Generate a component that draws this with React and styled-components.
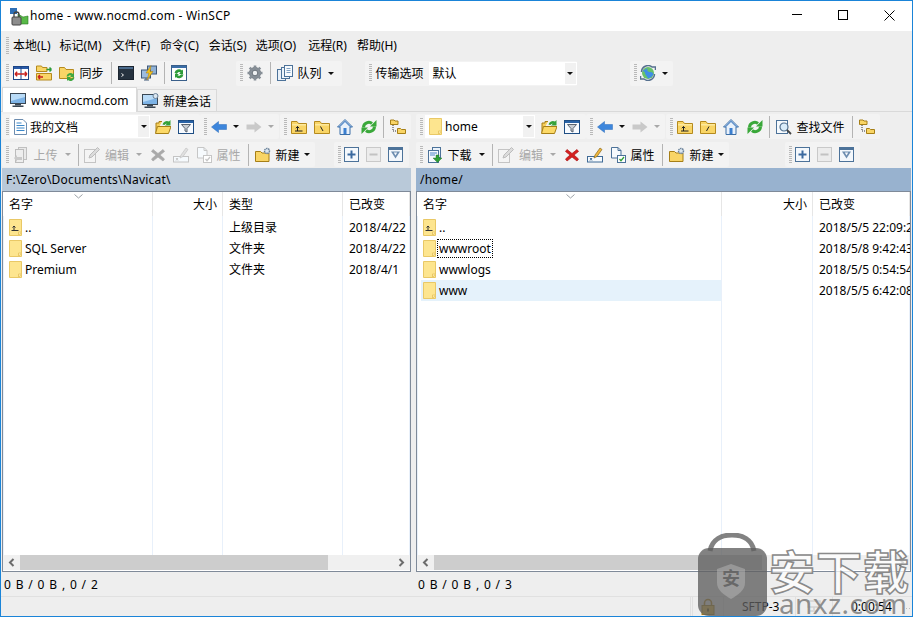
import React from 'react';
import styled, { createGlobalStyle } from 'styled-components';

const Global = createGlobalStyle`
  html, body { margin: 0; padding: 0; background: #eeeeee; }
  * { box-sizing: border-box; }
  body { font-family: "Noto Sans", "Noto Sans CJK SC", sans-serif; font-size: 12px; color: #000; }
`;

const Win = styled.div`
  width: 913px; height: 617px; position: relative; overflow: hidden;
  display: flex; flex-direction: column;
  border: 1px solid #1a84d8; background: #eeeeee;
`;
const TitleBar = styled.div`
  height: 30px; flex: none; background: #fff; display: flex; align-items: center; padding-left: 8px;
`;
const TitleText = styled.span`flex: 1; font-size: 12px; line-height: 16px; letter-spacing: .24px;`;
const WinBtn = styled.div`width: 46px; height: 30px; padding-bottom: 2px; display: flex; align-items: center; justify-content: center;`;
const MenuRow = styled.div`height: 29px; flex: none; display: flex; align-items: center; padding-left: 5px;`;
const MenuItem = styled.span`margin-left: ${p => p.$ml}px; white-space: nowrap; line-height: 16px;`;
const Row = styled.div`display: flex; align-items: center; height: ${p => p.$h || 27}px; padding-bottom: ${p => p.$pb || 0}px; flex: none;`;
const Band = styled.div`
  display: flex; align-items: center; height: 25px; background: #f3f3f3; border-radius: 2px;
  margin-left: ${p => p.$ml || 0}px; padding-left: 4px; padding-right: ${p => p.$pr ?? 2}px;
`;
const Handle = styled.i`
  display: block; width: 3px; height: 18px; flex: none;
  background: repeating-linear-gradient(to bottom, #b9b9b9 0 1px, transparent 1px 2px);
`;
const Sep = styled.i`display: block; width: 1px; height: 22px; background: #b4b4b4; margin: 0 2px 0 ${p => p.$l ?? 4}px; flex: none;`;
const Btn = styled.div`
  display: flex; align-items: center; height: 22px; padding: 0 3.5px; gap: 5px; flex: none; white-space: nowrap;
  color: ${p => p.$off ? '#a8a8a8' : '#000'}; margin-left: ${p => p.$ml || 0}px;
`;
const Caret = styled.i`
  display: block; width: 0; height: 0; flex: none; margin: 0 ${p => p.$mr ?? 3}px 0 ${p => p.$ml ?? 3}px;
  border: 3px solid transparent; border-bottom: 0; border-top: 3px solid ${p => p.$off ? '#a8a8a8' : '#111'};
`;
const Combo = styled.div`
  display: flex; align-items: center; height: 23px; width: ${p => p.$w}px; background: #fff; flex: none;
  margin-left: ${p => p.$ml || 0}px; border: 1px solid #fff; padding-left: 3px; gap: 3px;
`;
const ComboText = styled.span`flex: 1; white-space: nowrap;`;
const ComboDrop = styled.div`width: 11px; height: 21px; background: #f1f1f1; display: flex; align-items: center; justify-content: center;`;
const ComboCaret = styled(Caret)`margin: 0;`;
const Plain = styled.span`margin-left: ${p => p.$ml || 0}px; white-space: nowrap; flex: none;`;
const Tabs = styled.div`height: 26px; flex: none; display: flex; align-items: flex-end; border-bottom: 1px solid #d9d9d9; padding-left: 1px;`;
const Tab = styled.div`
  height: ${p => p.$on ? 25 : 22}px; width: ${p => p.$w}px; display: flex; align-items: center; gap: 4px; flex: none;
  background: ${p => p.$on ? '#fff' : '#f0f0f0'}; border: 1px solid #d9d9d9; border-bottom: 0; padding-left: ${p => p.$on ? 7 : 4}px;
  margin-bottom: ${p => p.$on ? -1 : 0}px; position: relative;
`;
const Panels = styled.div`flex: 1; display: flex; min-height: 0; padding: 2px 0 0 1px; gap: 5px;`;
const Panel = styled.div`width: ${p => p.$w}px; flex: none; display: flex; flex-direction: column;`;
const PathBar = styled.div`height: 23px; flex: none; background: ${p => p.$c}; display: flex; align-items: center; padding-left: 4px; font-size: 12px; letter-spacing: .2px;`;
const ListBox = styled.div`
  height: 381px; flex: none; border: 1px solid #7f8a99; background: #fff; display: flex; flex-direction: column; position: relative;
`;
const HeadRow = styled.div`height: 24px; flex: none; display: grid; grid-template-columns: ${p => p.$cols}; position: relative;`;
const Head = styled.div`
  border-right: 1px solid #e6e6e6; padding: 5px 5px 0 6px; text-align: ${p => p.$r ? 'right' : 'left'}; white-space: nowrap; overflow: hidden;
  line-height: 16px;
`;
const SortMark = styled.svg`position: absolute; top: 2px; left: ${p => p.$x}px;`;
const Body = styled.div`flex: 1; position: relative; padding-top: 1px; min-height: 0;`;
const Lines = styled.div`
  position: absolute; inset: 0; display: grid; grid-template-columns: ${p => p.$cols}; pointer-events: none;
`;
const LineCol = styled.div`border-right: 1px solid #e8f0fa; &:first-child { border-left: 1px solid #e8f0fa; }`;
const FileRow = styled.div`height: 21px; display: grid; grid-template-columns: ${p => p.$cols}; position: relative; white-space: nowrap; align-items: center; line-height: 16px;`;
const NameCell = styled.div`
  display: flex; align-items: center; gap: 3px; padding-left: 6px; height: 21px;
  background: ${p => p.$sel ? 'linear-gradient(#e5f2fb,#e5f2fb) 4px 0/calc(100% - 5px) 100% no-repeat' : 'none'};
`;
const FileName = styled.span`
  ${p => p.$focus ? 'outline: 1px dotted #000; outline-offset: 1px; line-height: 15px;' : ''}
`;
const Cell = styled.div`padding-left: 6px; overflow: hidden;`;
const HBar = styled.div`height: 15px; flex: none; background: #f0f0f0; display: flex; align-items: stretch; margin: 0 0 1px 0;`;
const ScrollBtn = styled.div`width: 17px; flex: none; display: flex; align-items: center; justify-content: center;`;
const Track = styled.div`flex: 1; position: relative;`;
const Thumb = styled.div`height: 100%; width: ${p => p.$w}px; background: #cdcdcd;`;
const Stat = styled.div`height: 23px; flex: none; display: flex; align-items: center; padding: 2px 0 0 2px; letter-spacing: .85px; font-size: 12px;`;
const BottomBar = styled.div`height: 20px; flex: none; border-top: 1px solid #e0e0e0; display: flex; justify-content: flex-end; align-items: stretch;`;
const SCell = styled.div`
  width: ${p => p.$w}px; flex: none; border-left: 1px solid #e0e0e0; display: flex; align-items: center; padding-left: ${p => p.$pl ?? 0}px;
  white-space: nowrap; padding-bottom: 1px;
`;
const Grip = styled.div`
  width: 7px; flex: none;
  background: radial-gradient(circle, #bdbdbd 0 1px, transparent 1px) 0 0/3px 3px;
  background-position: 0 10px; background-repeat: repeat-x;
`;
const Mark = styled.div`position: absolute; left: 695px; top: 532px; width: 216px; height: 84px; pointer-events: none;`;
const BagSvg = styled.svg`position: absolute; left: 0; top: 0;`;
const BagChar = styled.span`
  position: absolute; left: 26px; top: 34px; width: 18px; text-align: center; font-size: 18px; line-height: 20px; font-weight: 700;
  font-family: "Noto Sans CJK SC", sans-serif; color: rgba(95,95,95,.85);
`;
const MarkCn = styled.div`
  position: absolute; left: 73px; top: 16px; font-size: 46px; line-height: 40px; font-weight: 700; letter-spacing: 1px; white-space: nowrap;
  font-family: "Noto Sans CJK SC", sans-serif; color: rgba(255,255,255,.75); -webkit-text-stroke: 1.5px #8a8a8a;
`;
const MarkEn = styled.div`
  position: absolute; left: 83px; top: 59px; font-size: 28px; line-height: 22px; letter-spacing: .4px; color: rgba(125,125,125,.85); white-space: nowrap;
`;

const S = ({ children, w = 16, h = 16 }) => (
  <svg width={w} height={h} viewBox={`0 0 ${w} ${h}`} style={{ flex: 'none', display: 'block' }}>{children}</svg>
);
const Folder = ({ children }) => (
  <S><path d="M.5 14.500V2.500h5.500l1.500 2h8v10z" fill="#f9d566" stroke="#b58a1e" /><path d="M1 5h14v1.500H1z" fill="#fde99d" />{children}</S>
);
const FolderUp = () => <Folder><path d="M4 12h7.500M6.500 12V7.500M4.800 9.200L6.500 7.500l1.700 1.700" fill="none" stroke="#222" /></Folder>;
const FolderRoot = () => <Folder><path d="M6.500 7.500l2.500 4.500" stroke="#222" fill="none" /></Folder>;
const FolderSlash = () => <Folder><path d="M9 7.500l-2.500 4.500" stroke="#222" fill="none" /></Folder>;
const Compare = () => <S><rect x=".5" y="1.500" width="15" height="13" fill="#fff" stroke="#1c4587" /><rect x="1" y="2" width="14" height="2" fill="#2a5ba8" /><path d="M8 2v12" stroke="#1c4587" /><path d="M2 9h12M2 9l2.200-2.200M2 9l2.200 2.200M14 9l-2.200-2.200M14 9l-2.200 2.200" stroke="#c8201c" strokeWidth="1.400" fill="none" /></S>;
const SyncFolders = () => <S><path d="M.5 6.500V1h5l1 1.500H11v4z" fill="#f9d566" stroke="#b58a1e" /><path d="M.5 15V8.500h15V15z" fill="#f9d566" stroke="#b58a1e" /><path d="M2 12h5M2 12l2-2M2 12l2 2" stroke="#c8201c" strokeWidth="1.500" fill="none" /><path d="M15.500 4.500h-5M15.500 4.500l-2-2M15.500 4.500l-2 2" stroke="#2e9c3a" strokeWidth="1.500" fill="none" /></S>;
const FolderSync = () => <S><path d="M.5 13.500V2.500h5l1.500 2h7.500v9z" fill="#f9d566" stroke="#b58a1e" /><path d="M7.500 11.500A4 4 0 0 1 14 9l1-1v4h-4l1.300-1.300a2 2 0 0 0-3 .8z" fill="#3da73f" /><path d="M15.500 12.500A4 4 0 0 1 9 15l-1 1v-4h4l-1.300 1.300a2 2 0 0 0 3-.8z" fill="#3da73f" /></S>;
const Term = () => <S><rect x=".5" y="1.500" width="15" height="13" fill="#26323f" stroke="#1c2530" /><rect x="1" y="2" width="14" height="2" fill="#4a6a8c" /><path d="M3.500 8.500l2 1.500-2 1.500" stroke="#eee" fill="none" /></S>;
const Putty = () => <S><rect x="6.500" y="1" width="9" height="8" fill="#8fb1d6" stroke="#3e5878" /><rect x=".5" y="5" width="9" height="8" fill="#9dbce0" stroke="#3e5878" /><path d="M3 15h5M5 13v2" stroke="#3e5878" /><path d="M10 .5L5 8h3l-2 7 6-8.500H9z" fill="#f4c51f" stroke="#a87a10" strokeWidth=".5" /></S>;
const SyncBrowse = () => <S><rect x=".5" y=".5" width="15" height="15" fill="#fff" stroke="#3a5f8a" /><rect x="1" y="1" width="14" height="2" fill="#3a6ea8" /><path d="M3.500 8a4.500 4.500 0 0 1 7.500-2.500l1-1V9H8l1.500-1.500A2.300 2.300 0 0 0 6 9z" fill="#2e9c3a" /><path d="M12.500 9.500A4.500 4.500 0 0 1 5 12l-1 1V9h4l-1.500 1.300a2.300 2.300 0 0 0 3.500-1z" fill="#2e9c3a" /></S>;
const Gear = () => <S><circle cx="8" cy="8" r="5.500" fill="#8f979f" stroke="#6b737b" /><path d="M8 .5v15M.5 8h15M2.700 2.700l10.600 10.600M13.300 2.700L2.700 13.300" stroke="#878f97" strokeWidth="2.600" /><circle cx="8" cy="8" r="2.800" fill="#eef0f2" stroke="#6b737b" /></S>;
const Queue = () => <S><rect x=".5" y="4.500" width="8" height="11" fill="#e9f1f9" stroke="#4c7299" /><rect x="4.500" y="2.500" width="8" height="11" fill="#eef5fb" stroke="#4c7299" /><rect x="7.500" y=".5" width="8" height="11" fill="#f6fafd" stroke="#4c7299" /><path d="M9.500 3.500h4M9.500 5.500h4M9.500 7.500h4" stroke="#7fa0c2" /></S>;
const Globe = () => <S><circle cx="8" cy="8" r="6" fill="#67c16a" /><path d="M8 3c-2 2 0 4 2 4s4 1 3 3-3 3-5 3.500C7 11 5 10 5 8S3 7 3 5.500z" fill="#3f8ee6" /><path d="M1.500 7A6.500 6.500 0 0 1 12 2h3.500V5M14.500 9A6.500 6.500 0 0 1 4 14H.5v-3" fill="none" stroke="#56708f" strokeWidth="1.500" /></S>;
const OpenFolder = () => <S><path d="M1 14V4h3V2.500h3" fill="#f6cf5c" stroke="#a67f17" /><path d="M.5 14.500L2.500 7.500H16L13.500 14.500z" fill="#fcd967" stroke="#a67f17" /><path d="M7.500 5.500a4.500 4.500 0 0 1 6.500-3L15.500 1v5.500h-5.500l1.800-1.800A2.300 2.300 0 0 0 9.500 6z" fill="#35a13a" /></S>;
const Filter = () => <S><rect x=".5" y="1.500" width="15" height="13" fill="#f8fbff" stroke="#1f4e84" /><rect x="1" y="2" width="14" height="2" fill="#2a63a6" /><path d="M3.500 5.500h9L9 9.500V13L7 12V9.500z" fill="#c9ced4" stroke="#5a6470" /></S>;
const ArrowL = () => <S><path d="M.5 8L7.500 2.500V5.500H15.500V10.500H7.500V13.500z" fill="#3d86dc" stroke="#2a6cbb" strokeWidth=".5" /></S>;
const ArrowR = () => <S><path d="M15.500 8L8.500 2.500V5.500H.500V10.500H8.500V13.500z" fill="#c9c9c9" /></S>;
const Home = () => <S><path d="M8 .5L.5 8H3v7.500h10V8h2.500z" fill="#e9f1fa" stroke="#3b6fa8" /><path d="M8 1.500L1.500 8H3l5-5 5 5h1.500z" fill="#4f86c6" /><rect x="6.500" y="9" width="3" height="6" fill="#3b7fd0" /></S>;
const Refresh = () => <S><path d="M2.500 8.500C2.500 4 8 2 11 4.500" fill="none" stroke="#3aa83a" strokeWidth="3" /><path d="M9 7.500h6.500V1z" fill="#3aa83a" /><path d="M13.500 7.500C13.500 12 8 14 5 11.500" fill="none" stroke="#3aa83a" strokeWidth="3" /><path d="M7 8.500H.5V15z" fill="#3aa83a" /></S>;
const Tree = () => <S><path d="M.5 5.500V1h3.500l1 1h3v3.500z" fill="#f9d566" stroke="#a67f17" /><path d="M7.500 14.500V9.500h3l1 1h4v4z" fill="#f9d566" stroke="#a67f17" /><path d="M3 6v6h4" stroke="#333" strokeDasharray="1 1" fill="none" /></S>;
const Upload = () => <S><rect x="5.500" y=".5" width="8" height="12" fill="#e9e9e9" stroke="#c0c0c0" /><rect x="2.500" y="2.500" width="8" height="13" fill="#eee" stroke="#bcbcbc" /><path d="M1 11l3-3v2h5v3H4v2z" fill="#c9c9c9" /></S>;
const Download = () => <S><rect x="5.500" y=".5" width="8" height="10" fill="#eaf2fa" stroke="#4c7299" /><rect x="1.500" y="3.500" width="10" height="12" fill="#f5f9fd" stroke="#4c7299" /><path d="M3 6h7M3 8h5" stroke="#4f86c6" /><path d="M6 11h3V8h3v3h3l-4.500 4.500z" fill="#2f9e36" stroke="#1f6f24" strokeWidth=".4" /></S>;
const Edit = () => <S><rect x=".5" y="2.500" width="11" height="13" fill="#f4f4f4" stroke="#c4c4c4" /><path d="M5 11l1-3 7.500-7.500 2 2L8 10z" fill="#dcdcdc" stroke="#bcbcbc" /></S>;
const XIcon = ({ off }) => <S><path d="M3 2.500L8 6.500 13 2.500 14.500 4.500 10 8 14.500 12 13 14 8 10 3 14 1.500 12 6 8 1.500 4.500z" fill={off ? '#a9a9a9' : '#d41f1f'} stroke={off ? '#a9a9a9' : '#b01717'} strokeWidth=".7" /></S>;
const Rename = ({ off }) => { const b = off ? '#c4c4c4' : '#3f6a96'; return <S><rect x=".5" y="9.500" width="15" height="5.500" fill="#f6fafd" stroke={b} /><path d="M3 11l2 2.500M5 11l-2 2.500" stroke={b} /><path d="M7 11l1-3 5-7 2 1.500-5 7z" fill={off ? '#e0e0e0' : '#f0b63c'} stroke={off ? '#c4c4c4' : '#8a6a1d'} strokeWidth=".7" /></S>; };
const Props = ({ off }) => { const b = off ? '#c6c6c6' : '#4c7299'; return <S><path d="M1.500 .5H8l3 3V11H1.500z" fill="#f6fafd" stroke={b} /><path d="M8 .5v3h3" fill="none" stroke={b} /><rect x="7.500" y="8.500" width="8" height="7" fill="#fff" stroke={b} /><path d="M9.500 12l1.500 1.700L14 10" fill="none" stroke={off ? '#c6c6c6' : '#2f9e36'} strokeWidth="1.300" /></S>; };
const NewFolder = () => <S><path d="M.5 14.500V4.500h5l1.500 1.500h7v8.500z" fill="#f9d566" stroke="#a67f17" /><circle cx="12" cy="4" r="2.500" fill="#dbe6ef" stroke="#6a8199" strokeDasharray="1.500 .6" strokeWidth="1.400" /></S>;
const SmallBox = ({ children, off }) => <S w={15} h={15}><rect x=".5" y=".5" width="14" height="14" fill={off ? '#ececec' : '#f4f8fc'} stroke={off ? '#c9c9c9' : '#4c7299'} />{children}</S>;
const Plus = () => <SmallBox><path d="M3.500 7.500h8M7.500 3.500v8" stroke="#3b6aa0" strokeWidth="2" /></SmallBox>;
const Minus = () => <SmallBox off><path d="M3.500 7.500h8" stroke="#c2c2c2" strokeWidth="2" /></SmallBox>;
const FilterD = () => <SmallBox><rect x="1" y="1" width="13" height="2" fill="#4c7299" /><path d="M3 4.500h9L7.500 11.500z" fill="#6d8db0" /><path d="M5.800 5.500h3.400L7.500 8.500z" fill="#f4f8fc" /></SmallBox>;
const Find = () => <S><rect x=".5" y="1.500" width="11" height="13" fill="#f6fafd" stroke="#4c7299" /><circle cx="8" cy="8" r="4" fill="#d9ecfa" stroke="#53718f" strokeWidth="1.200" /><path d="M11 11l4 4" stroke="#444" strokeWidth="1.800" /></S>;
const Doc = () => <S w={13} h={16}><path d="M.5 .5H9l3.500 3.500v11.500H.5z" fill="#fff" stroke="#6d8db0" /><path d="M2.500 4h5M2.500 6.500h8M2.500 9h8M2.500 11.500h8" stroke="#3b87c9" /></S>;
const Monitor = ({ gear }) => <S w={17} h={16}><rect x=".5" y="1.500" width="15" height="10" fill="#7db3e6" stroke="#3a4754" /><path d="M1 2h14v3L1 9z" fill="#b9dbf7" /><rect x="5" y="12" width="6" height="1.500" fill="#3a4754" /><rect x="2.500" y="13.500" width="11" height="1.500" fill="#3a4754" />{gear && <circle cx="13.500" cy="3" r="2.500" fill="#dbe6ef" stroke="#6a8199" />}</S>;
const PlainFolder = ({ up }) => <S w={13} h={17}><path d="M.5 .5H12.500V16.500H.5z" fill="#fde58f" stroke="#e9c866" /><path d="M9.500 16.500V13h3z" fill="#fff3c4" stroke="#e9c866" />{up && <path d="M2.500 11.500h7M5 11.500V7M3.500 8.500L5 7l1.500 1.500" fill="none" stroke="#333" />}</S>;

const Lbl = ({ children }) => <span>{children}</span>;

const Chevron = ({ dir }) => <svg width="9" height="9" viewBox="0 0 9 9"><path d={dir === 'l' ? 'M6.500 1L3 4.500 6.500 8' : 'M2.500 1L6 4.500 2.500 8'} fill="none" stroke="#6c6c6c" strokeWidth="2" /></svg>;

const FileList = ({ cols, heads, sortX, rows, thumb }) => (
  <ListBox>
    <HeadRow $cols={cols}>
      {heads.map(h => <Head key={h.t} $r={h.r}>{h.t}</Head>)}
      <SortMark $x={sortX} width="9" height="5" viewBox="0 0 9 5"><path d="M.5 .5L4.500 4 8.500 .5" fill="none" stroke="#9aa0a6" /></SortMark>
    </HeadRow>
    <Body>
      <Lines $cols={cols}>{heads.map(h => <LineCol key={h.t} />)}</Lines>
      {rows.map(r => (
        <FileRow key={r.name} $cols={cols}>
          <NameCell $sel={r.sel}>
            <PlainFolder up={r.up} />
            <FileName $focus={r.focus}>{r.name}</FileName>
          </NameCell>
          {r.cells.map((c, i) => <Cell key={i}>{c}</Cell>)}
        </FileRow>
      ))}
    </Body>
    <HBar>
      <ScrollBtn><Chevron dir="l" /></ScrollBtn>
      <Track><Thumb $w={thumb} /></Track>
      <ScrollBtn><Chevron dir="r" /></ScrollBtn>
    </HBar>
  </ListBox>
);

const leftCols = '150px 70px 120px 1fr';
const rightCols = '305px 91px 1fr';

const leftRows = [
  { name: '..', up: true, cells: ['', '上级目录', '2018/4/22'] },
  { name: 'SQL Server', cells: ['', '文件夹', '2018/4/22'] },
  { name: 'Premium', cells: ['', '文件夹', '2018/4/1'] },
];
const rightRows = [
  { name: '..', up: true, cells: ['', '2018/5/5 22:09:22'] },
  { name: 'wwwroot', focus: true, cells: ['', '2018/5/8 9:42:43'] },
  { name: 'wwwlogs', cells: ['', '2018/5/5 0:54:54'] },
  { name: 'www', sel: true, cells: ['', '2018/5/5 6:42:08'] },
];

const menus = [['本地(L)', 4], ['标记(M)', 9], ['文件(F)', 11], ['命令(C)', 10], ['会话(S)', 10], ['选项(O)', 9], ['远程(R)', 12], ['帮助(H)', 10]];

export default function App() {
  return (
    <Win>
      <Global />
      <TitleBar>
        <S w={21} h={21}>
          <path d="M1 2h7v6H1z" fill="#2f6fb5" />
          <path d="M9 8l5 3 5-1v8H9z" fill="#58b947" stroke="#2d7a25" strokeWidth=".6" />
          <rect x="3" y="11" width="9" height="8" rx="1" fill="#8d8d8d" stroke="#444" />
          <path d="M5 11V8.500a2.500 2.500 0 0 1 5 0V11" fill="none" stroke="#444" strokeWidth="1.300" />
        </S>
        <TitleText>home - www.nocmd.com - WinSCP</TitleText>
        <WinBtn><svg width="10" height="2"><path d="M0 .5h10" stroke="#000" /></svg></WinBtn>
        <WinBtn><svg width="10" height="10"><rect x=".5" y=".5" width="9" height="9" fill="none" stroke="#000" /></svg></WinBtn>
        <WinBtn><svg width="11" height="11"><path d="M.5 .5l10 10M10.500 .5l-10 10" stroke="#000" /></svg></WinBtn>
      </TitleBar>

      <MenuRow>
        <Handle />
        {menus.map(([m, ml]) => <MenuItem key={m} $ml={ml}>{m}</MenuItem>)}
      </MenuRow>

      <Row $h={26}>
        <Band $ml={1} $pr={0}>
          <Handle />
          <Btn><Compare /></Btn><Btn><SyncFolders /></Btn><Btn><FolderSync /><Lbl>同步</Lbl></Btn>
          <Sep /><Btn><Term /></Btn><Btn><Putty /></Btn>
          <Sep /><Btn><SyncBrowse /></Btn>
        </Band>
        <Band $ml={46}>
          <Handle /><Btn><Gear /></Btn><Sep /><Btn><Queue /><Lbl>队列</Lbl></Btn><Caret $ml={2.5} $mr={6} />
        </Band>
        <Band $ml={23} $pr={0}>
          <Handle /><Plain $ml={4}>传输选项</Plain>
          <Combo $w={148} $ml={5}><ComboText>默认</ComboText><ComboDrop><ComboCaret /></ComboDrop></Combo>
        </Band>
        <Band $ml={53}>
          <Handle /><Btn><Globe /></Btn><Caret $ml={2.5} $mr={3} />
        </Band>
      </Row>

      <Tabs>
        <Tab $on $w={135}><Monitor /><span>www.nocmd.com</span></Tab>
        <Tab $w={80}><Monitor gear /><span>新建会话</span></Tab>
      </Tabs>

      <Panels>
        <Panel $w={409}>
          <Row $pb={2}>
            <Band>
              <Handle /><Combo $w={140} $ml={1}><Doc /><ComboText>我的文档</ComboText><ComboDrop><ComboCaret /></ComboDrop></Combo>
              <Btn $ml={1.5}><OpenFolder /></Btn><Btn><Filter /></Btn>
            </Band>
            <Band $ml={.5}>
              <Handle /><Btn><ArrowL /></Btn><Caret /><Btn><ArrowR /></Btn><Caret $off />
            </Band>
            <Band $ml={1}>
              <Handle /><Btn><FolderUp /></Btn><Btn><FolderRoot /></Btn><Btn><Home /></Btn><Btn $ml={1}><Refresh /></Btn><Sep $l={3} /><Btn><Tree /></Btn>
            </Band>
          </Row>
          <Row>
            <Band $pr={1}>
              <Handle /><Btn $off><Upload /><Lbl>上传</Lbl></Btn><Caret $off $ml={3.5} /><Sep />
              <Btn $off><Edit /><Lbl>编辑</Lbl></Btn><Caret $off $mr={4.5} />
              <Btn><XIcon off /></Btn><Btn><Rename off /></Btn><Btn $off><Props off /><Lbl>属性</Lbl></Btn>
              <Sep /><Btn><NewFolder /><Lbl>新建</Lbl></Btn><Caret $ml={.5} $mr={4} />
            </Band>
            <Band $ml={19}>
              <Handle /><Btn><Plus /></Btn><Btn><Minus /></Btn><Btn><FilterD /></Btn>
            </Band>
          </Row>
          <PathBar $c="#b9c9d9">F:\Zero\Documents\Navicat\</PathBar>
          <FileList cols={leftCols} sortX={71} thumb={308}
            heads={[{ t: '名字' }, { t: '大小', r: true }, { t: '类型' }, { t: '已改变' }]}
            rows={leftRows} />
          <Stat>0 B / 0 B , 0 / 2</Stat>
        </Panel>
        <Panel $w={495}>
          <Row $pb={2}>
            <Band>
              <Handle /><Combo $w={110} $ml={2}><PlainFolder /><ComboText>home</ComboText><ComboDrop><ComboCaret /></ComboDrop></Combo>
              <Btn $ml={2.5}><OpenFolder /></Btn><Btn><Filter /></Btn>
            </Band>
            <Band $ml={.5}>
              <Handle /><Btn><ArrowL /></Btn><Caret /><Btn><ArrowR /></Btn><Caret $off />
            </Band>
            <Band $ml={1}>
              <Handle /><Btn><FolderUp /></Btn><Btn><FolderSlash /></Btn><Btn><Home /></Btn><Btn $ml={1}><Refresh /></Btn><Sep $l={3} /><Btn><Find /><Lbl>查找文件</Lbl></Btn><Sep /><Btn><Tree /></Btn>
            </Band>
          </Row>
          <Row>
            <Band $pr={1}>
              <Handle /><Btn><Download /><Lbl>下载</Lbl></Btn><Caret $ml={3.5} /><Sep />
              <Btn $off><Edit /><Lbl>编辑</Lbl></Btn><Caret $off $mr={4.5} />
              <Btn><XIcon /></Btn><Btn><Rename /></Btn><Btn><Props /><Lbl>属性</Lbl></Btn>
              <Sep /><Btn><NewFolder /><Lbl>新建</Lbl></Btn><Caret $ml={.5} $mr={4} />
            </Band>
            <Band $ml={56}>
              <Handle /><Btn><Plus /></Btn><Btn><Minus /></Btn><Btn><FilterD /></Btn>
            </Band>
          </Row>
          <PathBar $c="#98b2cf">/home/</PathBar>
          <FileList cols={rightCols} sortX={149} thumb={328}
            heads={[{ t: '名字' }, { t: '大小', r: true }, { t: '已改变' }]}
            rows={rightRows} />
          <Stat>0 B / 0 B , 0 / 3</Stat>
        </Panel>
      </Panels>

      <BottomBar>
        <SCell $w={2} />
        <SCell $w={31} $pl={8}>
          <svg width="14" height="17" viewBox="0 0 14 17"><path d="M3.500 8V5a3.500 3.500 0 0 1 7 0v3" fill="none" stroke="#b58a1e" strokeWidth="1.600" /><rect x="1" y="7.500" width="12" height="9" fill="#e3b73d" stroke="#a67f17" /><rect x="6" y="10.500" width="2" height="3" fill="#6b5210" /></svg>
        </SCell>
        <SCell $w={72} $pl={18}>SFTP-3</SCell>
        <SCell $w={37} $pl={11}>
          <svg width="14" height="14" viewBox="0 0 14 14"><path d="M1 2h12v6H1zM7 8v3M3 12h8" fill="none" stroke="#d2d2d2" strokeWidth="1.500" /></svg>
        </SCell>
        <SCell $w={73} $pl={18}>0:00:54</SCell>
        <Grip />
      </BottomBar>

      <Mark>
        <BagSvg width="72" height="84" viewBox="0 0 72 84">
          <path d="M14 18C16 6 26 2 36 2s20 4 22 16" fill="none" stroke="rgba(95,95,95,.78)" strokeWidth="5" />
          <rect x="2" y="15" width="69" height="68" rx="11" fill="rgba(95,95,95,.78)" />
          <path d="M35 31l14 5v14c0 7-7 12-14 16-7-4-14-9-14-16V36z" fill="rgba(190,190,190,.45)" />
        </BagSvg>
        <BagChar>安</BagChar>
        <MarkCn>安下载</MarkCn>
        <MarkEn>anxz.com</MarkEn>
      </Mark>
    </Win>
  );
}
